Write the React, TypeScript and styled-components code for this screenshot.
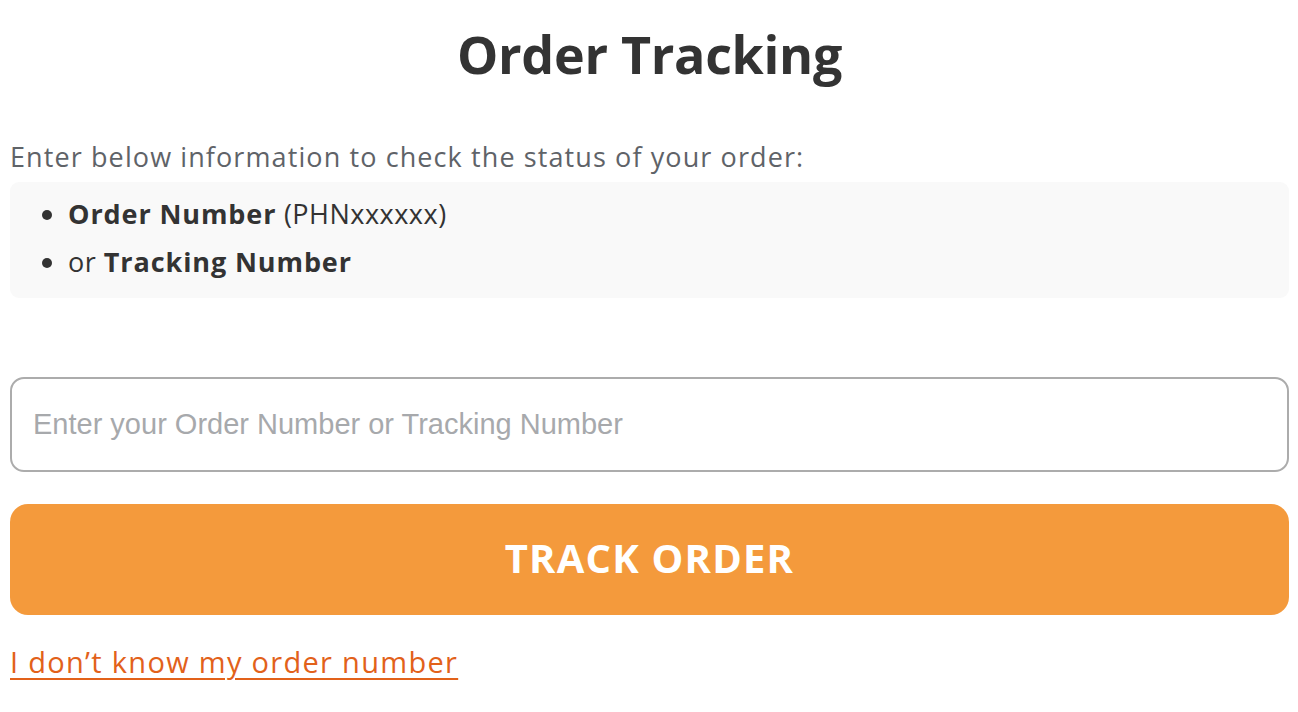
import styled, { createGlobalStyle } from 'styled-components';

const GlobalStyle = createGlobalStyle`
  body {
    margin: 0;
    background: #ffffff;
    font-family: 'Open Sans', 'Liberation Sans', sans-serif;
  }
`;

const Page = styled.div`
  display: flex;
  flex-direction: column;
  padding: 0 9px 0 10px;
`;

const Title = styled.h1`
  margin: 22px 0 0;
  text-align: center;
  font-family: 'Open Sans', sans-serif;
  font-weight: 700;
  font-size: 52px;
  line-height: 64px;
  color: #333333;
  letter-spacing: -0.3px;
`;

const Intro = styled.p`
  margin: 54px 0 0;
  font-family: 'Open Sans', sans-serif;
  font-size: 27px;
  line-height: 34px;
  letter-spacing: 1.1px;
  color: #5f6368;
`;

const InfoBox = styled.ul`
  margin: 8px 0 0;
  padding: 8px 0 12px 58px;
  background: #f9f9f9;
  border-radius: 9px;
  list-style: disc;
`;

const InfoItem = styled.li`
  font-family: 'Open Sans', sans-serif;
  font-size: 27px;
  line-height: 48px;
  letter-spacing: 0.5px;
  color: #333333;

  b {
    font-weight: 700;
    letter-spacing: 0.9px;
  }
`;

const Field = styled.input`
  margin-top: 79px;
  height: 95px;
  box-sizing: border-box;
  border: 2px solid #acacac;
  border-radius: 14px;
  padding: 0 21px;
  font-family: 'Liberation Sans', Arial, sans-serif;
  font-size: 29px;
  color: #333;
  outline: none;
  caret-color: #333;

  &::placeholder {
    color: #a7a9ac;
  }
`;

const TrackButton = styled.button`
  margin-top: 32px;
  height: 111px;
  padding: 0 0 5px;
  border: none;
  border-radius: 18px;
  background: #f49a3c;
  color: #ffffff;
  font-family: 'Open Sans', sans-serif;
  font-weight: 700;
  font-size: 40px;
  letter-spacing: 1.2px;
  cursor: pointer;
`;

const HelpLink = styled.a`
  align-self: flex-start;
  margin-top: 27px;
  font-family: 'Open Sans', sans-serif;
  font-size: 29px;
  line-height: 40px;
  letter-spacing: 1.3px;
  color: #e2611a;
  text-decoration: underline;
  text-underline-offset: 5px;
  text-decoration-thickness: 2px;
`;

const App = () => {
  return (
    <>
      <GlobalStyle />
      <Page>
        <Title>Order Tracking</Title>
        <Intro>Enter below information to check the status of your order:</Intro>
        <InfoBox>
          <InfoItem>
            <b>Order Number</b> (PHNxxxxxx)
          </InfoItem>
          <InfoItem>
            or <b>Tracking Number</b>
          </InfoItem>
        </InfoBox>
        <Field type="text" placeholder="Enter your Order Number or Tracking Number" autoFocus />
        <TrackButton>TRACK ORDER</TrackButton>
        <HelpLink href="#">I don’t know my order number</HelpLink>
      </Page>
    </>
  );
};

export default App;
